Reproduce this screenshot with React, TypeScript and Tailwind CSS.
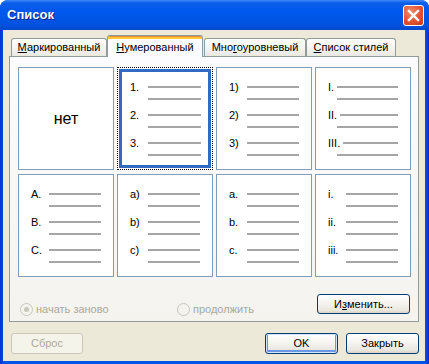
import React from 'react';

interface ListBoxProps {
  labels: string[];
  roman?: boolean;
}

const ListBox: React.FC<ListBoxProps> = ({ labels, roman }) => (
  <div className="h-[103px] border border-[#7f9db9] bg-white pl-[12px] pr-[12px] pt-[13px] flex flex-col gap-[4px]">
    {labels.map((label) => (
      <div key={label}>
        <div className="flex h-[12px] items-center">
          {roman ? (
            <span className="pr-[3px] text-[11px] leading-[12px] text-black">{label}</span>
          ) : (
            <span className="w-[18px] shrink-0 text-[11px] leading-[12px] text-black">{label}</span>
          )}
          <div className="h-[2px] flex-1 bg-[#a6a6a6]" />
        </div>
        <div className={`flex h-[12px] items-center ${roman ? 'pl-[9px]' : 'pl-[18px]'}`}>
          <div className="h-[2px] flex-1 bg-[#a6a6a6]" />
        </div>
      </div>
    ))}
  </div>
);

const SelectedBox: React.FC<{ labels: string[] }> = ({ labels }) => (
  <div className="h-[103px] border border-dotted border-black bg-white p-[1px]">
    <div className="h-full border-[3px] border-[#316ac5] pl-[8px] pr-[7px] pt-[9px] flex flex-col gap-[4px]">
      {labels.map((label) => (
        <div key={label}>
          <div className="flex h-[12px] items-center">
            <span className="w-[18px] shrink-0 text-[11px] leading-[12px] text-black">{label}</span>
            <div className="h-[2px] flex-1 bg-[#a6a6a6]" />
          </div>
          <div className="flex h-[12px] items-center pl-[18px]">
            <div className="h-[2px] flex-1 bg-[#a6a6a6]" />
          </div>
        </div>
      ))}
    </div>
  </div>
);

const Tab: React.FC<{ width: string; children: React.ReactNode }> = ({ width, children }) => (
  <div
    className={`${width} h-[18px] flex items-center justify-center rounded-t-[3px] border border-b-0 border-[#919b9c] bg-[linear-gradient(to_bottom,#ffffff,#f3f3ef_60%,#e9e8e1)] text-[11px] text-black`}
  >
    {children}
  </div>
);

const XpButton: React.FC<{ width: string; children: React.ReactNode; isDefault?: boolean; disabled?: boolean }> = ({
  width,
  children,
  isDefault,
  disabled
}) => {
  if (disabled) {
    return (
      <div className={`${width} h-[21px] flex items-center justify-center rounded-[3px] border border-[#c9c7ba] bg-[#f5f4ea] text-[11px] text-[#aca899]`}>
        {children}
      </div>
    );
  }
  return (
    <div
      className={`${width} h-[21px] flex items-center justify-center rounded-[3px] border border-[#003c74] bg-[linear-gradient(to_bottom,#ffffff,#f5f4f0_45%,#e9e7de_85%,#d8d2c6)] text-[11px] text-black ${
        isDefault ? 'shadow-[inset_0_0_0_1px_#cee7ff,inset_0_-1px_0_2px_#6d96e4]' : ''
      }`}
    >
      {children}
    </div>
  );
};

export default function App() {
  return (
    <div className="w-[429px] h-[364px] flex flex-col rounded-t-[8px] bg-[linear-gradient(to_right,#0831d9,#0054e3_1%,#0054e3_99%,#0831d9)] overflow-hidden font-['Liberation_Sans',Arial,sans-serif]">
      {/* title bar */}
      <div className="h-[30px] shrink-0 flex items-start justify-between pl-[7px] pr-[5px] bg-[linear-gradient(to_bottom,#3d8af7_0%,#0a5ee9_10%,#0058ee_35%,#0054e3_70%,#0150d9_90%,#0146c8_100%)]">
        <span className="mt-[7px] text-[13px] font-bold leading-[16px] text-white [text-shadow:1px_1px_0_#0a1f7a]">
          Список
        </span>
        <div className="mt-[5px] w-[21px] h-[21px] flex items-center justify-center rounded-[3px] border border-white bg-[radial-gradient(circle_at_35%_30%,#f08a6c,#e2542f_55%,#c43b16)]">
          <svg width="13" height="13" viewBox="0 0 13 13">
            <path d="M2 2 L11 11 M11 2 L2 11" stroke="white" strokeWidth="2.4" strokeLinecap="square" />
          </svg>
        </div>
      </div>

      {/* body */}
      <div className="flex-1 ml-[3px] mr-[4px] mb-[3px] bg-[#ece9d8] pl-[6px] pr-[6px] pt-[5px] pb-[7px] flex flex-col">
        {/* tabs */}
        <div className="h-[21px] ml-[2px] flex items-end">
          <Tab width="w-[96px]">
            <span><u>М</u>аркированный</span>
          </Tab>
          <div className="relative z-10 -mb-px w-[96px] h-[22px] flex flex-col rounded-t-[3px] border border-b-0 border-[#919b9c] bg-[#fcfcfe] overflow-hidden">
            <div className="h-[1px] bg-[#e68b2c]" />
            <div className="h-[2px] bg-[#ffc73c]" />
            <div className="flex-1 flex items-center justify-center pb-[1px] text-[11px] text-black">
              <span><u>Н</u>умерованный</span>
            </div>
          </div>
          <div className="w-[1px]" />
          <Tab width="w-[102px]">
            <span>Мно<u>г</u>оуровневый</span>
          </Tab>
          <Tab width="w-[90px]">
            <span><u>С</u>писок стилей</span>
          </Tab>
        </div>

        {/* panel */}
        <div className="h-[266px] shrink-0 border border-[#919b9c] bg-[linear-gradient(to_bottom,#fcfcfe,#f4f3ee)] pl-[8px] pr-[7px] pt-[10px]">
          <div className="grid grid-cols-4 gap-x-[3px] gap-y-[4px]">
            <div className="h-[103px] border border-[#7f9db9] bg-white flex items-center justify-center text-[16px] text-black">
              нет
            </div>
            <SelectedBox labels={['1.', '2.', '3.']} />
            <ListBox labels={['1)', '2)', '3)']} />
            <ListBox labels={['I.', 'II.', 'III.']} roman />
            <ListBox labels={['A.', 'B.', 'C.']} />
            <ListBox labels={['a)', 'b)', 'c)']} />
            <ListBox labels={['a.', 'b.', 'c.']} />
            <ListBox labels={['i.', 'ii.', 'iii.']} />
          </div>

          <div className="mt-[17px] h-[27px] flex items-start justify-between">
            <div className="ml-[2px] pt-[9px] flex">
              <div className="w-[157px] flex items-center gap-[3px]">
                <div className="w-[13px] h-[13px] rounded-full border border-[#c9c7ba] bg-[#f4f3ee] flex items-center justify-center">
                  <div className="w-[5px] h-[5px] rounded-full bg-[#cac8bb]" />
                </div>
                <span className="text-[11px] leading-[13px] text-[#aca899]">начать заново</span>
              </div>
              <div className="flex items-center gap-[3px]">
                <div className="w-[13px] h-[13px] rounded-full border border-[#c9c7ba] bg-[#f4f3ee]" />
                <span className="text-[11px] leading-[13px] text-[#aca899]">продолжить</span>
              </div>
            </div>
            <div className="mr-[1px] w-[93px] h-[20px] flex items-center justify-center rounded-[3px] border border-[#003c74] bg-[linear-gradient(to_bottom,#ffffff,#f5f4f0_45%,#e9e7de_85%,#d8d2c6)] text-[11px] text-black">
              <span>И<u>з</u>менить...</span>
            </div>
          </div>
        </div>

        {/* bottom buttons */}
        <div className="mt-[11px] flex items-center justify-between">
          <div className="ml-[2px]">
            <XpButton width="w-[72px]" disabled>
              Сброс
            </XpButton>
          </div>
          <div className="flex gap-[8px]">
            <XpButton width="w-[73px]" isDefault>
              OK
            </XpButton>
            <XpButton width="w-[73px]">Закрыть</XpButton>
          </div>
        </div>
      </div>
    </div>
  );
}
